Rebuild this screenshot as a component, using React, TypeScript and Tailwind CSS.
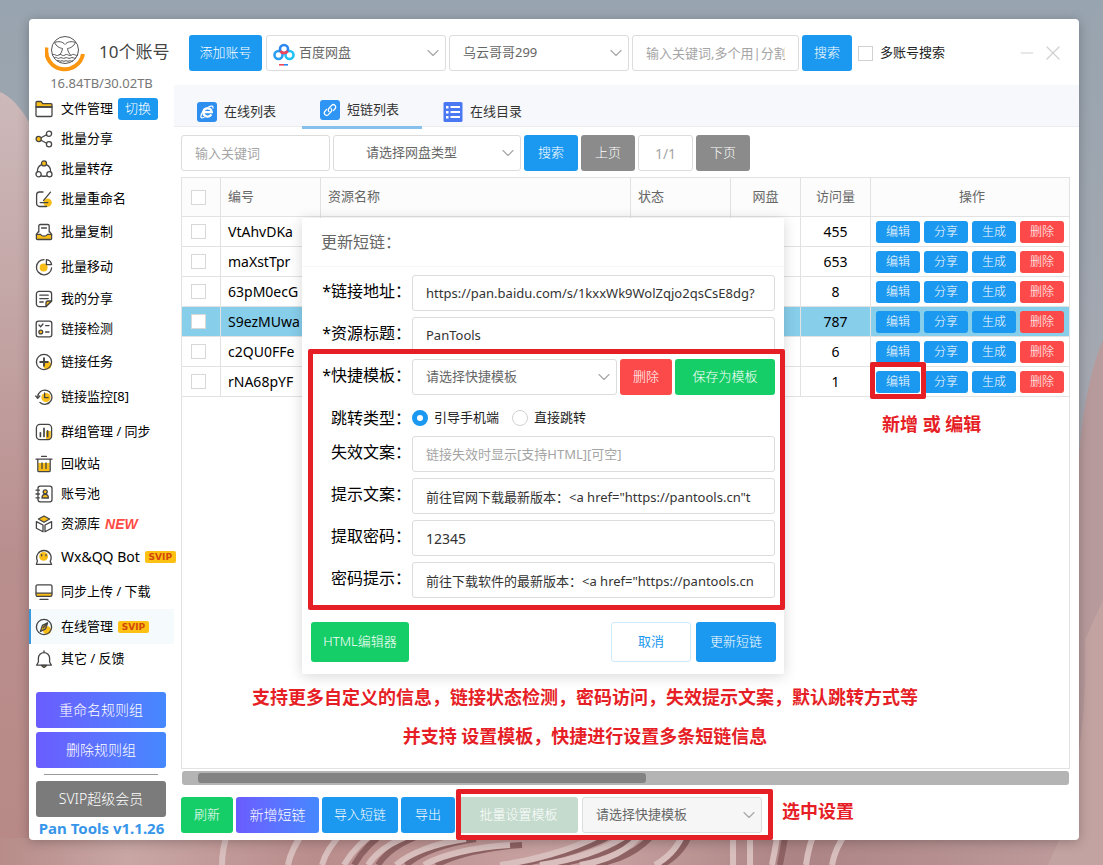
import React from "react";
import { ChevronDown, Link2, Minus, X } from "lucide-react";

const BLUE = "bg-[#1b98f0]";
const GREEN = "bg-[#16ce68]";
const RED = "bg-[#fc4a4a]";
const GRAY = "bg-[#8b8b8b]";
const PURPLE = "bg-linear-to-r from-[#6a5cff] to-[#4488ff]";

const Y = "#f8bd17";

const icons: Record<string, React.ReactNode> = {
  folder: (
    <>
      <path d="M1 7V2.6C1 2 1.4 1.5 2 1.5h4l2 2.2h8c.6 0 1 .4 1 1V7z" fill={Y} />
      <path d="M1 7h16v8.2c0 .7-.5 1.3-1.2 1.3H2.2c-.7 0-1.2-.6-1.2-1.3z" />
    </>
  ),
  share: (
    <>
      <path d="M6 7.8l5.6-3M6 10.2l5.6 3" />
      <circle cx="3.7" cy="9" r="2.6" fill={Y} />
      <circle cx="14" cy="3.7" r="2.6" />
      <circle cx="14" cy="14.3" r="2.6" />
    </>
  ),
  transfer: (
    <>
      <path d="M6.6 4.6A7.5 7.5 0 0 0 2.4 11.6M11.4 4.6a7.5 7.5 0 0 1 4.2 7M6.5 15.8c1.6.6 3.4.6 5 0" />
      <circle cx="9" cy="3.4" r="2.5" fill={Y} />
      <circle cx="3.6" cy="14.3" r="2.6" />
      <circle cx="14.4" cy="14.3" r="2.6" />
    </>
  ),
  rename: (
    <>
      <circle cx="12.6" cy="12.6" r="4.2" fill={Y} stroke="none" />
      <path d="M8 2H4.5A3 3 0 0 0 1.6 5v8.5a3 3 0 0 0 3 3h7" />
      <path d="M15.5 2.2L8.6 10.4M5.2 12.6h7.6" />
    </>
  ),
  inbox: (
    <>
      <path d="M1.4 11.4h4.2c.8 2.2 6 2.2 6.8 0h4.2v4c0 .6-.5 1.1-1.1 1.1h-13c-.6 0-1.1-.5-1.1-1.1z" fill={Y} />
      <path d="M3.8 9V3c0-.8.6-1.5 1.4-1.5h7.6c.8 0 1.4.7 1.4 1.5v6M1.4 11.4L3.8 8M16.6 11.4L14.2 8M6.6 5h4.8" />
    </>
  ),
  pie: (
    <>
      <circle cx="8.6" cy="9.4" r="4" fill={Y} stroke="none" />
      <path d="M9 1.6a7.6 7.6 0 1 0 7.6 8.4" />
      <path d="M11.4 1.6v5h5.2a6 6 0 0 0-5.2-5z" fill="#fff" />
    </>
  ),
  note: (
    <>
      <path d="M11 16.6H4A2.6 2.6 0 0 1 1.4 14V4A2.6 2.6 0 0 1 4 1.4h10A2.6 2.6 0 0 1 16.6 4v7z" />
      <path d="M11 16.6V13a2 2 0 0 1 2-2h3.600z" fill={Y} />
      <path d="M4.8 5.2h8.400M4.8 8.6h8.400M4.8 12h3.400" />
    </>
  ),
  checklist: (
    <>
      <rect x="1.2" y="1.2" width="15.6" height="15.6" rx="2.2" />
      <path d="M4 5l1.600 1.700L8 4M10.600 5.600h3.400M10.600 12h3.400" />
      <circle cx="5.8" cy="12" r="1.9" fill={Y} />
    </>
  ),
  plus: (
    <>
      <circle cx="12.2" cy="12.2" r="4" fill={Y} stroke="none" />
      <circle cx="9" cy="9" r="7.6" />
      <path d="M9 5.200v7.600M5.200 9h7.600" strokeWidth="1.9" />
    </>
  ),
  history: (
    <>
      <circle cx="11" cy="9.6" r="4.6" fill={Y} stroke="none" />
      <path d="M2.700 9A7.100 7.100 0 1 1 5 14.400" />
      <path d="M.8 8l1.900 2.400L4.800 8M9.600 5v4.600h3.600" />
    </>
  ),
  chart: (
    <>
      <path d="M11 8h4.800v8H11z" fill={Y} stroke="none" />
      <rect x="1.4" y="1.4" width="15.2" height="15.2" rx="3.6" />
      <path d="M5.400 9.800v3.600M9 5.400v8M12.600 7.800v5.600" strokeWidth="1.7" />
    </>
  ),
  trash: (
    <>
      <path d="M3.200 8h11.600v8H3.200z" fill={Y} stroke="none" />
      <path d="M1 4.200h16M6.600 1.400h4.800M2.800 4.400v11c0 .7.500 1.200 1.200 1.200h10c.7 0 1.200-.5 1.200-1.200v-11M7 8v5.600M11 8v5.600" />
    </>
  ),
  contact: (
    <>
      <rect x="3" y="1.2" width="14" height="15.6" rx="2.2" />
      <path d="M1 5.200h3.400M1 9h3.400M1 12.800h3.400" />
      <path d="M7 13c0-2.200 1-3.600 3.200-3.600S13.400 10.800 13.400 13z" fill={Y} />
      <circle cx="10.2" cy="6.8" r="2" fill={Y} />
    </>
  ),
  boxes: (
    <>
      <path d="M9 1l5.600 3L9 7.200 3.400 4z" fill={Y} />
      <path d="M1.400 6.600L8 10v6.800l-6.600-3.600zM16.600 6.600L10 10v6.800l6.600-3.600z" />
    </>
  ),
  bot: (
    <>
      <circle cx="8.6" cy="8.4" r="4.4" fill={Y} stroke="none" />
      <path d="M1.400 16.400l1-3.600a7.200 7.200 0 1 1 12.800.4l1.400 3.200H1.400" />
      <path d="M6.600 6.600v1.200M11 6.600v1.200" />
    </>
  ),
  monitor: (
    <>
      <path d="M1.200 10.200h15.600v3H1.200z" fill={Y} stroke="none" />
      <rect x="1" y="1.8" width="16" height="11.6" rx="1.6" />
      <path d="M1.200 10.200h15.600M5 16.400h8" />
    </>
  ),
  compass: (
    <>
      <circle cx="12" cy="12.2" r="4" fill={Y} stroke="none" />
      <circle cx="9" cy="9" r="7.6" />
      <path d="M12.600 4.800l-2 6-5.200 2.600 2-6z" fill={Y} />
      <path d="M8.200 9.800l4-4.600" />
    </>
  ),
  bell: (
    <>
      <path d="M6.400 15.400h5.200L9 17.600z" fill={Y} />
      <path d="M1.600 15.200h14.800l-1.800-3.200V8.200a5.600 5.600 0 0 0-11.200 0V12zM9 2.400V.8" />
    </>
  ),
};

const Icon = ({ name }: { name: string }) => (
  <svg
    viewBox="0 0 18 18"
    className="size-[18px] shrink-0"
    fill="none"
    stroke="#454545"
    strokeWidth="1.3"
    strokeLinecap="round"
    strokeLinejoin="round"
  >
    {icons[name]}
  </svg>
);

type NavItem = { icon: string; text: string; tall?: boolean; active?: boolean; latin?: boolean; badge?: string };

const nav: NavItem[] = [
  { icon: "folder", text: "文件管理", badge: "switch" },
  { icon: "share", text: "批量分享" },
  { icon: "transfer", text: "批量转存" },
  { icon: "rename", text: "批量重命名" },
  { icon: "inbox", text: "批量复制", tall: true },
  { icon: "pie", text: "批量移动", tall: true },
  { icon: "note", text: "我的分享" },
  { icon: "checklist", text: "链接检测" },
  { icon: "plus", text: "链接任务", tall: true },
  { icon: "history", text: "链接监控[8]", tall: true },
  { icon: "chart", text: "群组管理 / 同步", tall: true },
  { icon: "trash", text: "回收站" },
  { icon: "contact", text: "账号池" },
  { icon: "boxes", text: "资源库", badge: "new" },
  { icon: "bot", text: "Wx&QQ Bot", tall: true, latin: true, badge: "svip" },
  { icon: "monitor", text: "同步上传 / 下载", tall: true },
  { icon: "compass", text: "在线管理", tall: true, active: true, badge: "svip" },
  { icon: "bell", text: "其它 / 反馈" },
];

const rows = [
  { id: "VtAhvDKa", visits: 455 },
  { id: "maXstTpr", visits: 653 },
  { id: "63pM0ecG", visits: 8 },
  { id: "S9ezMUwa", visits: 787, selected: true },
  { id: "c2QU0FFe", visits: 6 },
  { id: "rNA68pYF", visits: 1, marked: true },
];

const Btn = ({ className, children }: { className: string; children: React.ReactNode }) => (
  <button className={`h-9 shrink-0 rounded-[3px] text-[13px] font-light text-white whitespace-nowrap ${className}`}>
    {children}
  </button>
);

const field = "h-9 rounded-[3px] border border-[#dcdcdc] bg-white px-[13px] placeholder:text-[#a5a5a5] outline-none";

const Select = ({
  id,
  label,
  value,
  className,
  inner = "",
}: {
  id: string;
  label?: string;
  value: string;
  className: string;
  inner?: string;
}) => (
  <div className={`relative shrink-0 ${className}`}>
    <select
      id={id}
      aria-label={label}
      className={`h-9 w-full appearance-none rounded-[3px] border border-[#dcdcdc] bg-transparent px-[13px] text-[13px] text-[#666] outline-none ${inner}`}
    >
      <option>{value}</option>
    </select>
    <ChevronDown className="pointer-events-none absolute top-2 right-[3px] size-5 text-[#a8a8a8]" strokeWidth={1.4} />
  </div>
);

const Svip = () => (
  <span className="flex h-3 w-[31px] shrink-0 items-center justify-center rounded-[2px] bg-[#fdc113] font-['DejaVu_Sans',sans-serif] text-[9px] leading-3 font-bold text-[#d2480c]">
    SVIP
  </span>
);

const Avatar = () => (
  <svg viewBox="0 0 40 40" className="size-10" fill="none">
    <path d="M1.500 15.500A18.500 18.500 0 1 0 38 22" stroke="#fb9610" strokeWidth="4" />
    <g stroke="#555" strokeWidth="1">
      <circle cx="20" cy="18" r="13.5" fill="#fff" />
      <path d="M9.500 10.500c4-1.500 8-1 10.500 2 2.500-3 6.500-3.500 10.500-2-2 4-5 5.500-8 6 .5 3 1.500 5 3.500 7M9.500 10.500c2 4 5 5.500 8 6-.5 3-1.500 5-3.500 7" />
      <path d="M7 23c3-2 4 2 6.500 0s4 2 6.500 0 4 2 6.500 0 4 1.500 6.500 0M9 26c2.500-2 3.500 1.500 5.500 0s3.500 1.500 5.500 0 3.500 1.500 5.500 0 3.500 1 5.500 0M12 29c2-1.500 2.500 1 4 0s2.500 1 4 0 2.500 1 4 0 2.500 1 4 0" />
    </g>
  </svg>
);

const Wallpaper = () => (
  <svg className="absolute inset-0 size-full" viewBox="0 0 1103 865" preserveAspectRatio="none" aria-hidden="true">
    <defs>
      <linearGradient id="sky" x1="0" y1="0" x2="0" y2="1">
        <stop offset="0" stopColor="#98a4af" />
        <stop offset=".45" stopColor="#a5a8b1" />
        <stop offset="1" stopColor="#b09a9d" />
      </linearGradient>
      <linearGradient id="petal" x1="0" y1="0" x2="0" y2="1">
        <stop offset="0" stopColor="#cdb9ba" />
        <stop offset=".6" stopColor="#b98f8e" />
        <stop offset="1" stopColor="#b88986" />
      </linearGradient>
      <linearGradient id="floor" x1="0" y1="0" x2="1" y2="0">
        <stop offset="0" stopColor="#b78c89" />
        <stop offset=".12" stopColor="#c8a6a4" />
        <stop offset=".3" stopColor="#b98d8c" />
        <stop offset=".55" stopColor="#c9a4a3" />
        <stop offset=".75" stopColor="#ad8485" />
        <stop offset="1" stopColor="#bd9a9b" />
      </linearGradient>
    </defs>
    <rect width="1103" height="865" fill="url(#sky)" />
    <path d="M0 92c20 8 38 40 60 100v673H0z" fill="url(#petal)" />
    <path d="M1103 340c-18 40-30 120-30 260v265h30z" fill="#b79a9c" />
    <path d="M1085 640c2 80-6 150-40 225h58V600z" fill="#c3a3a2" />
    <path d="M0 838h1060l-12 27H0z" fill="url(#floor)" />
    <g fill="none" stroke="#8e6263" strokeWidth="6">
      <path d="M354 865c8-14 20-26 36-36M378 865c10-16 32-28 56-34M406 865c14-12 40-22 70-26M436 865c18-10 50-18 86-20M512 865c30-4 70-14 100-30M552 865c40-6 70-18 90-32M592 865c28-4 50-16 62-32M662 865c14-8 24-20 28-32M780 865c2-12 5-24 6-35" />
    </g>
    <g fill="none" stroke="#d8bfbe" strokeWidth="6">
      <path d="M222 865c0-12 2-22 6-34M288 865c2-12 8-22 16-34M322 865c3-12 12-24 22-34M344 865c8-14 20-26 36-36M368 865c10-16 32-28 56-34M396 865c14-12 40-22 70-26M424 865c18-10 50-18 86-20" />
      <path d="M500 865c30-4 70-14 100-30M540 865c40-6 70-18 90-32M580 865c28-4 50-16 62-32M655 865c14-8 24-20 28-32M733 830v35M750 830v35M772 865c2-12 5-24 6-35M806 865c2-14 4-24 10-35M832 865c2-12 8-24 16-35" />
    </g>
  </svg>
);

const Sidebar = () => (
  <aside className="flex w-[145px] shrink-0 flex-col">
    <div className="flex h-[75px] flex-col">
      <div className="flex items-center gap-[14px] pt-[13px] pl-4">
        <Avatar />
        <span className="text-[17px] leading-6 whitespace-nowrap text-[#444]">10个账号</span>
      </div>
      <p className="text-center text-[13px] leading-[22px] text-[#777]">16.84TB/30.02TB</p>
    </div>
    <nav>
      {nav.map((item) => (
        <div
          key={item.text}
          className={`flex items-center gap-[5px] border-l-2 pl-1 ${item.tall ? "h-[35px]" : "h-[30px]"} ${
            item.active ? "border-[#3c98dc] bg-[#f5fafd]" : "border-transparent"
          }`}
        >
          <a
            href="#"
            className={`flex items-center gap-2 whitespace-nowrap text-black ${item.latin ? "text-sm" : "text-[13px]"}`}
          >
            <Icon name={item.icon} />
            {item.text}
          </a>
          {item.badge === "switch" && (
            <button className="h-[22px] w-10 rounded-[3px] bg-[#1b98f0] text-[13px] font-light text-white">切换</button>
          )}
          {item.badge === "new" && (
            <span className="font-['Liberation_Sans',sans-serif] text-sm font-bold text-[#ff4b43] italic">NEW</span>
          )}
          {item.badge === "svip" && <Svip />}
        </div>
      ))}
    </nav>
    <div className="mt-[18px] flex flex-col gap-1 pr-2 pl-[7px]">
      <Btn className={PURPLE}>
        <span className="text-sm">重命名规则组</span>
      </Btn>
      <Btn className={PURPLE}>
        <span className="text-sm">删除规则组</span>
      </Btn>
      <hr className="mx-2 my-[2px] border-[#999]" />
      <Btn className="bg-[#7b7b7b]">
        <span className="text-sm">SVIP超级会员</span>
      </Btn>
    </div>
    <p className="text-center text-[15px] leading-[22px] font-bold whitespace-nowrap text-[#3795ea]">Pan Tools v1.1.26</p>
  </aside>
);

const Header = () => (
  <header className="flex h-[66px] items-center gap-[3px] pt-[2px] pr-[14px] pl-[15px]">
    <Btn className={`w-[73px] ${BLUE}`}>添加账号</Btn>
    <div className="relative ml-px">
      <Select id="disk" label="网盘" value="百度网盘" className="w-[180px]" inner="pl-8" />
      <svg viewBox="0 0 22 24" className="pointer-events-none absolute top-[7px] left-[7px] h-6 w-[22px]" fill="none">
        <circle cx="5.5" cy="13" r="4" stroke="#2a9df4" strokeWidth="2.6" />
        <circle cx="16.5" cy="13" r="4" stroke="#22c3f3" strokeWidth="2.6" />
        <circle cx="11" cy="7" r="4" stroke="#2a86f0" strokeWidth="2.6" />
        <path d="M7.500 9a4 4 0 0 0 7 0" stroke="#f0465a" strokeWidth="2.6" />
        <path d="M6 22.800h5" stroke="#f0465a" strokeWidth="1.6" />
        <path d="M11 22.800h4" stroke="#2a86f0" strokeWidth="1.6" />
      </svg>
    </div>
    <Select id="account" label="账号" value="乌云哥哥299" className="w-[180px]" />
    <input aria-label="关键词" placeholder="输入关键词,多个用|分割" className={`w-[167px] text-[13px] ${field}`} />
    <Btn className={`w-[50px] ${BLUE}`}>搜索</Btn>
    <label className="ml-[3px] flex items-center gap-[7px] text-[13px] whitespace-nowrap text-[#222]">
      <input type="checkbox" className="size-[15px] appearance-none border border-[#d2d2d2] bg-white" />
      多账号搜索
    </label>
    <div className="ml-auto flex items-center gap-1 text-[#cfcfcf]">
      <button aria-label="最小化">
        <Minus className="size-5" strokeWidth={1.2} />
      </button>
      <button aria-label="关闭">
        <X className="size-6" strokeWidth={1.2} />
      </button>
    </div>
  </header>
);

const Tabs = () => (
  <div className="flex h-[42px] gap-[3px] border-b border-[#ececf0] bg-[#f7f8fb] pl-[5px] text-[13px] text-[#333]">
    <a href="#" className="flex h-[54px] w-[120px] items-center gap-[7px] pl-[18px]">
      <span className="flex size-5 items-center justify-center rounded-[3px] bg-[#2e8ff0]">
        <svg viewBox="0 0 16 16" className="size-4" fill="none" stroke="#fff" strokeWidth="2.2">
          <path d="M4.500 8.200h8.300A4.300 4.300 0 0 0 4.300 8a4.300 4.300 0 0 0 8 2.400" />
          <path d="M13.800 4.500c1-2.800-1.600-3-4.600-1.200C4.500 5 2 10 1.800 12.600c0 1.800 1.800 1.600 3.600.6" strokeWidth="1.2" />
        </svg>
      </span>
      在线列表
    </a>
    <a href="#" className="flex h-11 w-[120px] items-center gap-[7px] border-b-[3px] border-[#87c0ea] pt-2 pl-[18px]">
      <span className="flex size-5 items-center justify-center rounded-[3px] bg-[#2e95f5]">
        <svg viewBox="0 0 16 16" className="size-4" fill="none" stroke="#fff" strokeWidth="1.3" strokeLinecap="round">
          <path d="M7 9.600a2.400 2.400 0 0 1 0-3.400l2.600-2.800a2.400 2.400 0 0 1 3.400 3.400l-1.600 1.800" />
          <path d="M9 6.400a2.400 2.400 0 0 1 0 3.400l-2.600 2.800A2.400 2.400 0 0 1 3 9.200l1.600-1.800" />
        </svg>
      </span>
      短链列表
    </a>
    <a href="#" className="flex h-[54px] w-[120px] items-center gap-[7px] pl-[18px]">
      <svg viewBox="0 0 20 20" className="size-5">
        <rect width="19" height="20" x=".5" rx="1.5" fill="#4a78f2" />
        <path
          d="M3 4h2.500v2.500H3zM3 9h2.500v2.500H3zM3 14h2.500v2.500H3zM7.500 4h9.500v2H7.500zM7.500 9h9.500v2H7.500zM7.500 14h9.500v2H7.500z"
          fill="#fff"
        />
      </svg>
      在线目录
    </a>
  </div>
);

const Filters = () => (
  <div className="flex gap-[3px] pt-2 pb-[6px]">
    <input aria-label="输入关键词" placeholder="输入关键词" className={`w-[149px] text-[13px] ${field}`} />
    <Select id="type" label="网盘类型" value="请选择网盘类型" className="w-[188px]" inner="pl-8" />
    <Btn className={`w-[54px] ${BLUE}`}>搜索</Btn>
    <Btn className={`w-[54px] ${GRAY}`}>上页</Btn>
    <input
      aria-label="页码"
      placeholder="1/1"
      className="h-9 w-[55px] rounded-[3px] border border-[#dcdcdc] text-center text-sm placeholder:text-[#a5a5a5]"
    />
    <Btn className={`w-[54px] ${GRAY}`}>下页</Btn>
  </div>
);

const th = "h-[39px] border-r border-b border-[#e2e2e2] font-normal";
const td = "h-[30px] border-r border-b border-[#e2e2e2] p-0";
const small = "h-[22px] w-11 rounded-[3px] text-xs font-light text-white";
const box = "block size-[15px] appearance-none border border-[#d8d8d8] bg-white";

const LinkTable = () => (
  <div className="flex-1 border border-[#e2e2e2]">
    <table className="w-full table-fixed border-separate border-spacing-0">
      <colgroup>
        <col className="w-[39px]" />
        <col className="w-[100px]" />
        <col />
        <col className="w-[100px]" />
        <col className="w-[70px]" />
        <col className="w-[70px]" />
        <col className="w-[198px]" />
      </colgroup>
      <thead className="bg-[#fcfcfc] text-[13px] text-[#666]">
        <tr>
          <th className={`${th} pl-[9px]`}>
            <input type="checkbox" aria-label="全选" className={box} />
          </th>
          <th className={`${th} pl-[7px] text-left`}>编号</th>
          <th className={`${th} pl-[7px] text-left`}>资源名称</th>
          <th className={`${th} pl-[7px] text-left`}>状态</th>
          <th className={th}>网盘</th>
          <th className={th}>访问量</th>
          <th className="h-[39px] border-b border-[#e2e2e2] pl-1 font-normal">操作</th>
        </tr>
      </thead>
      <tbody className="text-sm text-black">
        {rows.map((row) => (
          <tr key={row.id} className={row.selected ? "bg-[#87ceeb]" : ""}>
            <td className={`${td} pl-[9px]`}>
              <input type="checkbox" aria-label={row.id} className={box} />
            </td>
            <td className={`${td} pt-px pl-[7px]`}>{row.id}</td>
            <td className={td} />
            <td className={td} />
            <td className={td} />
            <td className={`${td} pt-px text-center`}>{row.visits}</td>
            <td className="border-b border-[#e2e2e2] p-0">
              <div className="flex gap-1 pl-[5px]">
                <span className="relative flex">
                  <button className={`${small} ${BLUE}`}>编辑</button>
                  {row.marked && (
                    <span className="pointer-events-none absolute -inset-x-[6px] -top-[9px] -bottom-[6px] rounded-[2px] border-[5px] border-[#e61e26]" />
                  )}
                </span>
                <button className={`${small} ${BLUE}`}>分享</button>
                <button className={`${small} ${BLUE}`}>生成</button>
                <button className={`${small} ${RED}`}>删除</button>
              </div>
            </td>
          </tr>
        ))}
      </tbody>
    </table>
  </div>
);

const Footer = () => (
  <footer className="flex items-center gap-[3px] pt-3 pb-[7px]">
    <Btn className={`w-[52px] ${GREEN}`}>刷新</Btn>
    <Btn className={`w-[83px] ${PURPLE}`}>
      <span className="text-sm">新增短链</span>
    </Btn>
    <Btn className={`w-[76px] ${BLUE}`}>导入短链</Btn>
    <Btn className={`w-[54px] ${BLUE}`}>导出</Btn>
    <div className="relative ml-px flex gap-1">
      <Btn className="w-[119px] bg-[#c5dbce]">批量设置模板</Btn>
      <Select id="batch" label="批量模板" value="请选择快捷模板" className="w-[180px] rounded-[3px] bg-[#f6f6f6]" />
      <span className="pointer-events-none absolute -top-2 -right-[11px] -bottom-[7px] -left-[3px] rounded-[2px] border-[5px] border-[#e61e26]" />
    </div>
    <strong className="ml-[17px] pb-2 text-lg leading-7 text-[#e61e26]">选中设置</strong>
  </footer>
);

const label = "w-[100px] shrink-0 text-right text-base leading-6 whitespace-nowrap text-black";
const radio =
  "size-4 shrink-0 appearance-none rounded-full border border-[#d2d2d2] bg-white checked:border-[5px] checked:border-[#1b98f0]";

const TextRow = ({
  id,
  name,
  value,
  placeholder,
  className = "text-[13px]",
}: {
  id: string;
  name: string;
  value?: string;
  placeholder?: string;
  className?: string;
}) => (
  <div className="flex gap-px">
    <label htmlFor={id} className={`${label} pt-1`}>
      {name}
    </label>
    <input
      id={id}
      defaultValue={value}
      placeholder={placeholder}
      className={`min-w-0 flex-1 text-[#333] ${field} ${className}`}
    />
  </div>
);

const LinkDialog = () => (
  <div
    role="dialog"
    aria-label="更新短链"
    className="absolute top-[199px] left-[273px] w-[482px] rounded-[2px] bg-white shadow-[0_2px_14px_rgba(0,0,0,0.16)]"
  >
    <h2 className="h-[49px] border-b border-[#f6f6f6] px-[19px] pt-3 text-base leading-6 text-[#666]">更新短链：</h2>
    <form className="relative flex flex-col gap-[6px] px-[9px] pt-2">
      <TextRow id="url" name="*链接地址：" value="https://pan.baidu.com/s/1kxxWk9WolZqjo2qsCsE8dg?" />
      <TextRow id="title" name="*资源标题：" value="PanTools" />
      <div className="flex gap-[3px]">
        <div className="flex gap-px">
          <label htmlFor="template" className={`${label} pt-1`}>
            *快捷模板：
          </label>
          <Select id="template" value="请选择快捷模板" className="w-[205px]" />
        </div>
        <Btn className={`w-[52px] ${RED}`}>删除</Btn>
        <Btn className={`flex-1 ${GREEN}`}>保存为模板</Btn>
      </div>
      <div role="radiogroup" aria-labelledby="jump" className="flex h-[29px] items-center gap-px pt-[5px]">
        <span id="jump" className={label}>
          跳转类型：
        </span>
        <label className="flex items-center gap-[6px] text-[13px] text-[#222]">
          <input type="radio" name="jump" defaultChecked className={radio} />
          引导手机端
        </label>
        <label className="ml-3 flex items-center gap-[6px] text-[13px] text-[#222]">
          <input type="radio" name="jump" className={radio} />
          直接跳转
        </label>
      </div>
      <TextRow id="invalid" name="失效文案：" placeholder="链接失效时显示[支持HTML][可空]" />
      <TextRow id="tip" name="提示文案：" value={'前往官网下载最新版本：<a href="https://pantools.cn"t'} />
      <TextRow id="pwd" name="提取密码：" value="12345" className="text-sm" />
      <TextRow id="pwdTip" name="密码提示：" value={'前往下载软件的最新版本：<a href="https://pantools.cn'} />
      <span className="pointer-events-none absolute top-[82px] -right-px -bottom-3 left-[6px] rounded-[2px] border-[5px] border-[#e61e26]" />
    </form>
    <div className="flex gap-[5px] pt-6 pr-2 pb-3 pl-[9px]">
      <button className="mr-auto h-10 w-[98px] rounded-[3px] bg-[#16ce68] text-[13px] font-light text-white">
        HTML编辑器
      </button>
      <button className="h-10 w-20 rounded-[3px] border border-[#cde9fa] bg-white text-[13px] text-[#1b98f0]">取消</button>
      <button className="h-10 w-20 rounded-[3px] bg-[#1b98f0] text-[13px] font-light text-white">更新短链</button>
    </div>
  </div>
);

export default function App() {
  return (
    <div className="relative flex min-h-screen flex-col pt-[19px] pr-6 pb-[25px] pl-[29px] font-['Noto_Sans','Noto_Sans_CJK_SC',sans-serif]">
      <Wallpaper />
      <div className="relative flex flex-1 rounded-[4px] bg-white shadow-[0_2px_12px_rgba(0,0,0,0.25)]">
        <Sidebar />
        <main className="flex min-w-0 flex-1 flex-col">
          <Header />
          <Tabs />
          <div className="flex flex-1 flex-col pr-[9px] pl-[7px]">
            <Filters />
            <LinkTable />
            <div className="mx-px mt-[2px] h-[14px] rounded-[3px] bg-[#b4b4b4] px-4 py-[2px]">
              <div className="h-[10px] w-[448px] rounded-[3px] bg-[#838383]" />
            </div>
            <Footer />
          </div>
        </main>
        <LinkDialog />
        <div className="pointer-events-none absolute top-[659px] left-[216px] w-[680px] text-center text-lg leading-[39px] font-bold whitespace-nowrap text-[#e61e26]">
          <p>支持更多自定义的信息，链接状态检测，密码访问，失效提示文案，默认跳转方式等</p>
          <p>并支持 设置模板，快捷进行设置多条短链信息</p>
        </div>
        <strong className="pointer-events-none absolute top-[391px] left-[853px] text-lg leading-7 text-[#e61e26]">
          新增 或 编辑
        </strong>
      </div>
    </div>
  );
}
